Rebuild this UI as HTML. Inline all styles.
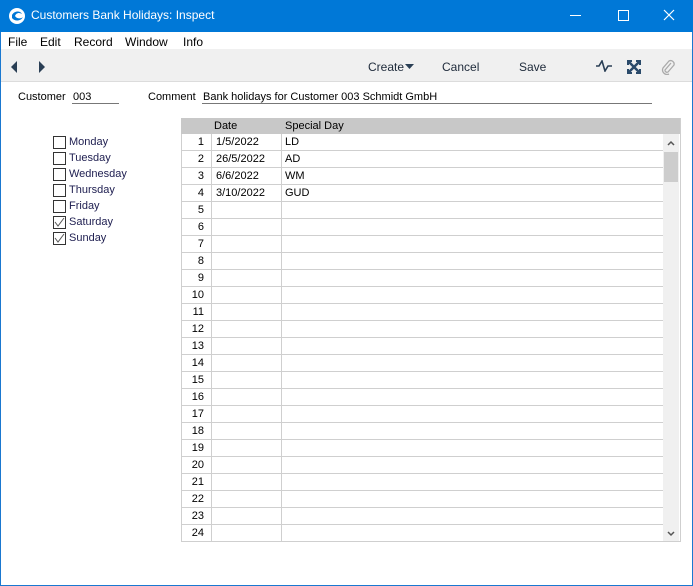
<!DOCTYPE html><html><head><style>
body{margin:0;width:693px;height:586px;position:relative;overflow:hidden;font-family:"Liberation Sans",sans-serif;font-size:11px;color:#000;background:#fff}
.a{position:absolute}
#win{position:absolute;left:0;top:0;width:691px;height:585px;border:1px solid #1a78d0;border-top:none}
.cb{position:absolute;left:53px;width:11px;height:11px;border:1px solid #333;background:#fff}
.cl{position:absolute;left:69px;color:#1e1e50}
.row{position:absolute;left:181px;width:482px;height:16px;border-bottom:1px solid #cfcfcf}
.row span{position:absolute;top:2px}
</style></head><body>
<div id="win"></div>
<div class="a" style="left:0;top:0;width:693px;height:32px;background:#0078d7"></div>
<svg class="a" style="left:8px;top:7px" width="18" height="18"><circle cx="9" cy="9" r="8" fill="#fff"/><path d="M4 8c2-4 8-5 10-1-3-2-6-1-7 2 2 3 6 3 8 1-2 4-8 5-11 1z" fill="#0078d7"/></svg>
<div class="a" style="left:31px;top:8px;color:#fff;font-size:12px">Customers Bank Holidays: Inspect</div>
<div class="a" style="left:570px;top:15px;width:11px;height:1px;background:#fff"></div>
<div class="a" style="left:618px;top:10px;width:9px;height:9px;border:1px solid #fff"></div>
<svg class="a" style="left:663px;top:9px" width="12" height="12"><path d="M1 1L11 11M11 1L1 11" stroke="#fff" stroke-width="1.2"/></svg>
<div class="a" style="left:1px;top:32px;width:691px;height:17px;background:#fff"></div>
<div class="a" style="left:8px;top:35px;font-size:12px">File</div>
<div class="a" style="left:40px;top:35px;font-size:12px">Edit</div>
<div class="a" style="left:74px;top:35px;font-size:12px">Record</div>
<div class="a" style="left:125px;top:35px;font-size:12px">Window</div>
<div class="a" style="left:183px;top:35px;font-size:12px">Info</div>
<div class="a" style="left:1px;top:49px;width:691px;height:32px;background:#f0f0f0;border-bottom:1px solid #dcdcdc"></div>
<svg class="a" style="left:10px;top:60px" width="40" height="14"><path d="M7 1L1 7L7 13z" fill="#2a3f55"/><path d="M29 1L35 7L29 13z" fill="#2a3f55"/></svg>
<div class="a" style="left:368px;top:60px;font-size:12px;color:#1e2a3a">Create</div>
<svg class="a" style="left:405px;top:64px" width="9" height="6"><path d="M0 0H9L4.5 5z" fill="#2a3f55"/></svg>
<div class="a" style="left:442px;top:60px;font-size:12px;color:#1e2a3a">Cancel</div>
<div class="a" style="left:519px;top:60px;font-size:12px;color:#1e2a3a">Save</div>
<svg class="a" style="left:596px;top:60px" width="16" height="12"><path d="M0 6H3L6 1L9 11L12 6H16" stroke="#2a3f55" stroke-width="1.6" fill="none"/></svg>
<svg class="a" style="left:627px;top:60px" width="14" height="14"><path d="M1 1L13 13M13 1L1 13" stroke="#2a4a6a" stroke-width="2.5"/><path d="M0 0h5v2h-3v3h-2zM14 0v5h-2v-3h-3v-2zM0 14v-5h2v3h3v2zM14 14h-5v-2h3v-3h2z" fill="#2a4a6a"/></svg>
<svg class="a" style="left:661px;top:59px" width="14" height="16"><path d="M10 4L4 11a2 2 0 0 0 3 2l6-7a3.5 3.5 0 0 0-5-4L2 9a4.5 4.5 0 0 0 6 6" stroke="#aaa" stroke-width="1.3" fill="none"/></svg>
<div class="a" style="left:18px;top:91px">Customer</div>
<div class="a" style="left:73px;top:91px">003</div>
<div class="a" style="left:72px;top:103px;width:47px;height:1px;background:#777"></div>
<div class="a" style="left:148px;top:91px">Comment</div>
<div class="a" style="left:203px;top:91px">Bank holidays for Customer 003 Schmidt GmbH</div>
<div class="a" style="left:202px;top:103px;width:450px;height:1px;background:#777"></div>
<div class="cb" style="top:136px"></div><div class="cl" style="top:136px">Monday</div>
<div class="cb" style="top:152px"></div><div class="cl" style="top:152px">Tuesday</div>
<div class="cb" style="top:168px"></div><div class="cl" style="top:168px">Wednesday</div>
<div class="cb" style="top:184px"></div><div class="cl" style="top:184px">Thursday</div>
<div class="cb" style="top:200px"></div><div class="cl" style="top:200px">Friday</div>
<div class="cb" style="top:216px"><svg width="11" height="11" style="position:absolute"><path d="M1 5L4 9L10 1" stroke="#555" fill="none"/></svg></div><div class="cl" style="top:216px">Saturday</div>
<div class="cb" style="top:232px"><svg width="11" height="11" style="position:absolute"><path d="M1 5L4 9L10 1" stroke="#555" fill="none"/></svg></div><div class="cl" style="top:232px">Sunday</div>
<div class="a" style="left:181px;top:118px;width:498px;height:423px;border:1px solid #cfcfcf;border-top:none"></div>
<div class="a" style="left:181px;top:118px;width:499px;height:16px;background:#c8c8c8"></div>
<div class="a" style="left:214px;top:120px">Date</div>
<div class="a" style="left:285px;top:120px">Special Day</div>
<div class="a" style="left:663px;top:134px;width:16px;height:407px;background:#f0f0f0"></div>
<div class="a" style="left:664px;top:152px;width:14px;height:30px;background:#cdcdcd"></div>
<svg class="a" style="left:667px;top:140px" width="8" height="6"><path d="M1 5L4 2L7 5" stroke="#555" stroke-width="1.5" fill="none"/></svg>
<svg class="a" style="left:667px;top:531px" width="8" height="6"><path d="M1 1L4 4L7 1" stroke="#555" stroke-width="1.5" fill="none"/></svg>
<div class="a" style="left:211px;top:134px;width:1px;height:408px;background:#cfcfcf"></div>
<div class="a" style="left:281px;top:134px;width:1px;height:408px;background:#cfcfcf"></div>
<div id="rows"></div>
<script>
var d=[["1/5/2022","LD"],["26/5/2022","AD"],["6/6/2022","WM"],["3/10/2022","GUD"]],h="";
for(var i=1;i<=24;i++){var t=134+(i-1)*17;var r=d[i-1]||["",""];
h+='<div class="row" style="top:'+t+'px"><span style="right:'+(482-23)+'px;width:30px;text-align:right;left:auto"></span><span style="left:0;width:23px;text-align:right">'+i+'</span><span style="left:35px">'+r[0]+'</span><span style="left:104px">'+r[1]+'</span></div>';}
document.getElementById('rows').innerHTML=h;
</script>
</body></html>
